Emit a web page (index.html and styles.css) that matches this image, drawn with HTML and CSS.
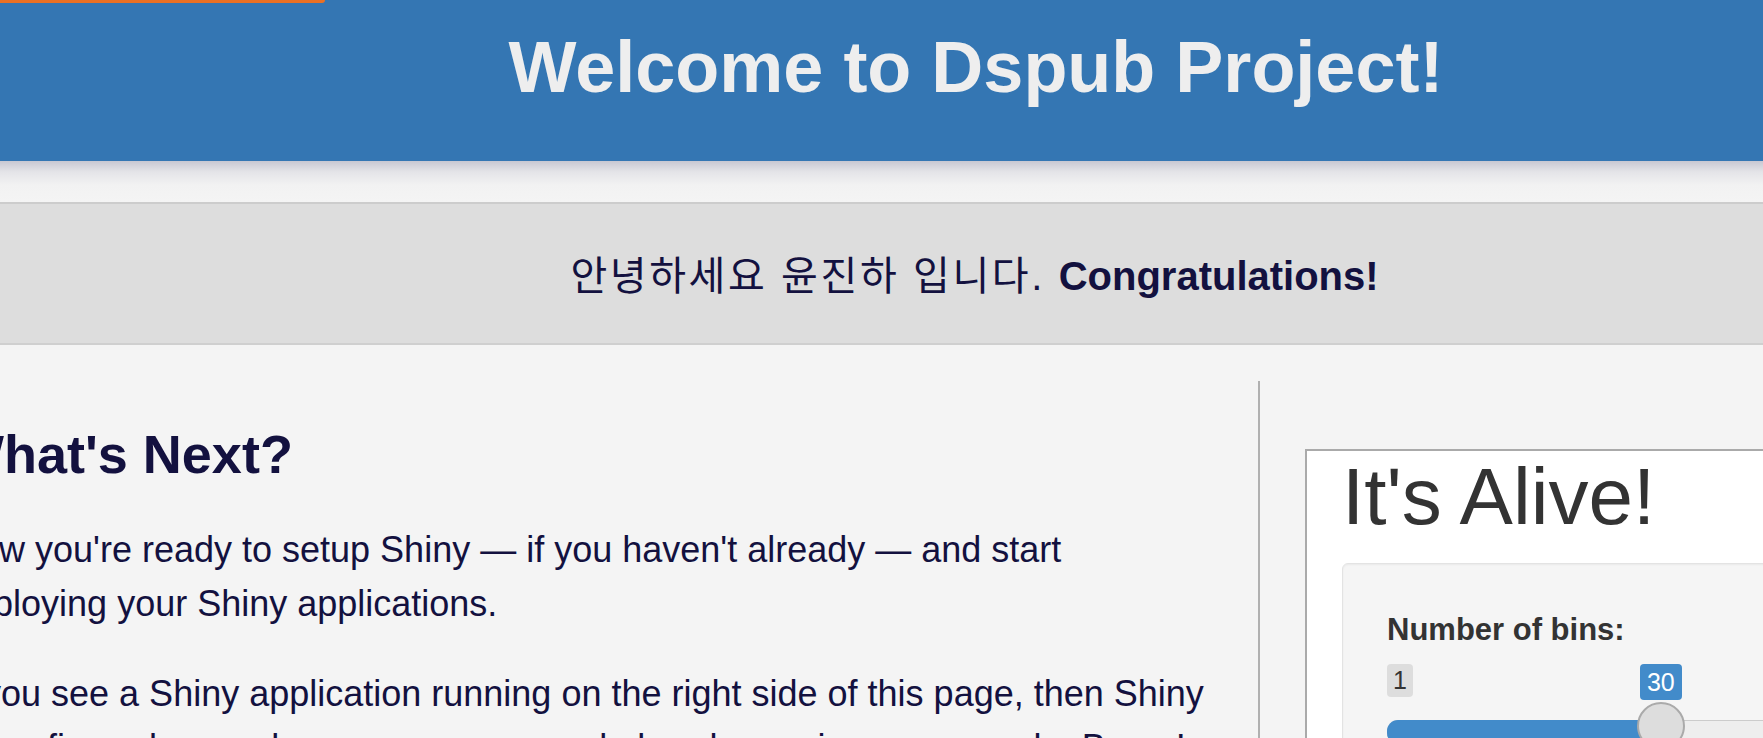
FILE: index.html
```html
<!DOCTYPE html>
<html lang="ko">
<head>
<meta charset="utf-8">
<title>Welcome to Dspub Project!</title>
<link rel="stylesheet" href="styles.css">
</head>
<body>
<header class="top">
  <div class="ribbon"></div>
  <h1 class="title">Welcome to Dspub Project!</h1>
</header>
<div class="shade"></div>
<section class="band">
  <p class="hello"><span class="ko">안녕하세요 윤진하 입니다. </span><strong>Congratulations!</strong></p>
</section>
<main class="main">
  <div class="left">
    <h2 class="next">What's Next?</h2>
    <p class="copy">Now you're ready to setup Shiny — if you haven't already — and start deploying your Shiny applications.</p>
    <p class="copy">If you see a Shiny application running on the right side of this page, then Shiny is configured properly on your server and already running an example. Bravo!</p>
  </div>
  <div class="right">
    <div class="app">
      <h2 class="app-title">It's Alive!</h2>
      <div class="well">
        <label class="bins">Number of bins:</label>
        <div class="slider">
          <div class="slider-labels">
            <span class="min">1</span>
            <span class="val">30</span>
          </div>
          <div class="track">
            <div class="fill" style="width: 273px"></div>
            <div class="handle" style="left: 249px"></div>
          </div>
        </div>
      </div>
    </div>
  </div>
</main>
</body>
</html>
```

FILE: styles.css
```css
html, body {
  margin: 0;
  padding: 0;
}
body {
  background: #f4f4f4;
  font-family: "Liberation Sans", Arial, "Noto Sans CJK KR", sans-serif;
  color: #13113f;
  overflow: hidden;
  width: 1763px;
  height: 738px;
}

.top {
  position: relative;
  height: 161px;
  background: #3476b3;
  overflow: hidden;
}
.ribbon {
  position: absolute;
  left: 0;
  top: 0;
  width: 325px;
  height: 3px;
  background: #ea7024;
  border-bottom-right-radius: 3px;
}
.title {
  margin: 26px 0 0;
  padding-left: 189px;
  text-align: center;
  font-size: 72px;
  font-weight: bold;
  line-height: normal;
  color: #eeeeee;
}

.shade {
  height: 41px;
  background: linear-gradient(to bottom, #c8c8d2 0px, #e4e4e8 11px, #f2f2f2 24px, #f4f4f4 41px);
}

.band {
  background: #dddddd;
  border-top: 2px solid #cccccc;
  border-bottom: 2px solid #cfcfcf;
  padding: 48px 0 43px 186px;
  text-align: center;
}
.hello {
  margin: 0;
  font-size: 40px;
  line-height: 48px;
  color: #13113f;
}
.ko {
  letter-spacing: 2.6px;
}
.hello strong {
  font-weight: bold;
}

.main {
  display: flex;
  margin-top: 36px;
  margin-left: -95px;
  width: 2300px;
}
.left {
  box-sizing: border-box;
  width: 1353px;
  flex: none;
  padding: 0 48px;
}
.next {
  margin: 42px 0 38px;
  font-size: 54px;
  font-weight: bold;
  line-height: normal;
}
.copy {
  margin: 0 0 36px;
  font-size: 36px;
  line-height: 54px;
}

.right {
  flex: none;
  width: 940px;
  border-left: 2px solid #b0b0b0;
  padding-left: 45px;
  min-height: 400px;
}
.app {
  margin-top: 68px;
  width: 880px;
  min-height: 400px;
  background: #ffffff;
  border: 2px solid #aaaaaa;
  padding-left: 35px;
}
.app-title {
  margin: 0 0 20px 0;
  font-size: 80px;
  font-weight: normal;
  line-height: normal;
  color: #333333;
}
.well {
  background: #f5f5f5;
  border: 1px solid #e3e3e3;
  border-radius: 6px;
  box-shadow: inset 0 1px 2px rgba(0, 0, 0, 0.05);
  padding: 48px 0 60px 44px;
  min-height: 300px;
}
.bins {
  display: block;
  font-size: 31px;
  font-weight: bold;
  line-height: 36px;
  color: #333333;
}
.slider {
  margin-top: 16px;
}
.slider-labels {
  display: flex;
  align-items: flex-start;
  height: 36px;
}
.min {
  display: block;
  background: #dddddd;
  color: #333333;
  border-radius: 4px;
  font-size: 25px;
  line-height: 33px;
  padding: 0 6px;
}
.val {
  display: block;
  margin-left: 227px;
  background: #428bca;
  color: #ffffff;
  border-radius: 4px;
  font-size: 25px;
  line-height: 36px;
  padding: 0 7px;
}
.track {
  position: relative;
  margin-top: 20px;
  height: 22px;
  width: 600px;
  background: #eeeeee;
  border: 1px solid #cccccc;
  border-radius: 11px;
}
.fill {
  height: 100%;
  background: #428bca;
  border-radius: 11px 0 0 11px;
  margin: -1px 0 0 -1px;
  padding-bottom: 2px;
}
.handle {
  position: absolute;
  top: -19px;
  box-sizing: border-box;
  width: 48px;
  height: 48px;
  border-radius: 50%;
  background: #dddddd;
  border: 2px solid #aaaaaa;
}
```
